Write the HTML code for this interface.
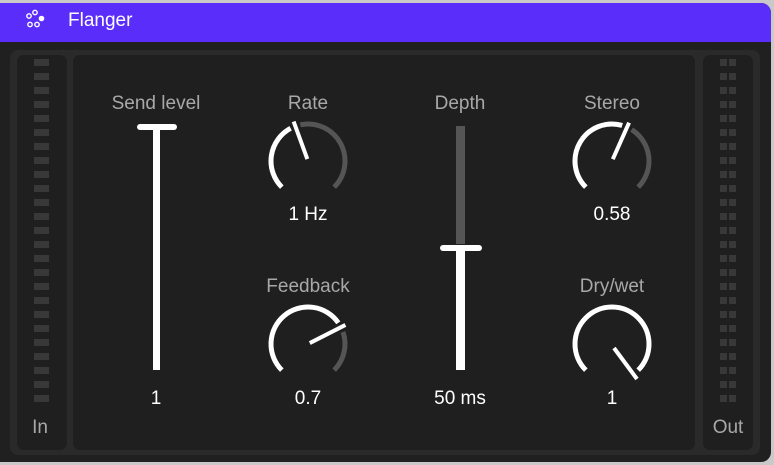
<!DOCTYPE html>
<html><head><style>
body{margin:0;width:774px;height:465px;background:#c9c9c9;overflow:hidden;font-family:"Liberation Sans",sans-serif;position:relative}
.win{position:absolute;left:0;top:3px;width:771px;height:459px;background:#202020;border-radius:0 10px 10px 0;overflow:hidden}
.hdr{position:absolute;left:0;top:0;width:771px;height:39px;background:#5a2dfb}
.hdr .t{position:absolute;left:68px;top:7px;color:#fff;font-size:19px}
.box{position:absolute;left:10px;top:47px;width:750px;height:405px;background:#2a2a2a;border-radius:8px}
.p{position:absolute;background:#1f1f1f;border-radius:7px}
.lbl{position:absolute;color:#a8a8a8;font-size:19px;text-align:center;width:140px}
.val{position:absolute;color:#fff;font-size:19px;text-align:center;width:140px}
</style></head><body>
<div class="win">
<div class="hdr"><svg style="position:absolute;left:24px;top:6px" width="24" height="24"><g fill="none" stroke="#fff" stroke-width="1.4"><circle cx="5" cy="7" r="2.2"/><circle cx="11" cy="3.5" r="2.2"/><circle cx="6" cy="15.5" r="2.2"/><circle cx="13" cy="15.5" r="2.2"/></g><circle cx="17.5" cy="9.5" r="2.8" fill="#fff"/></svg><div class="t">Flanger</div></div>
<div class="box"></div>
<div class="p" style="left:17px;top:52px;width:50px;height:395px"></div>
<div class="p" style="left:73px;top:52px;width:622px;height:395px"></div>
<div class="p" style="left:703px;top:52px;width:50px;height:395px"></div>
<div class="lbl" style="left:86px;top:90px">Send level</div>
<div class="lbl" style="left:238px;top:90px">Rate</div>
<div class="lbl" style="left:390px;top:90px">Depth</div>
<div class="lbl" style="left:542px;top:90px">Stereo</div>
<div class="lbl" style="left:238px;top:273px">Feedback</div>
<div class="lbl" style="left:542px;top:273px">Dry/wet</div>
<div class="val" style="left:238px;top:201px">1 Hz</div>
<div class="val" style="left:542px;top:201px">0.58</div>
<div class="val" style="left:86px;top:385px">1</div>
<div class="val" style="left:238px;top:385px">0.7</div>
<div class="val" style="left:390px;top:385px">50 ms</div>
<div class="val" style="left:542px;top:385px">1</div>
<div class="lbl" style="left:-30px;top:414px">In</div>
<div class="lbl" style="left:658px;top:414px">Out</div>
<svg style="position:absolute;left:0;top:-3px" width="774" height="465" id="s"></svg>
</div>
<script>
var s=document.getElementById('s'),h='';
h+='<rect x="153" y="128" width="7" height="242" fill="#fff"/><rect x="137" y="124" width="40" height="6" rx="3" fill="#fff"/>';
h+='<rect x="456" y="126" width="9" height="118" fill="#555"/><rect x="456" y="250" width="9" height="120" fill="#fff"/><rect x="440" y="245" width="42" height="6" rx="3" fill="#fff"/>';
function pt(cx,cy,r,a){a=a*Math.PI/180;return [cx+r*Math.sin(a),cy-r*Math.cos(a)];}
function arc(cx,cy,r,a1,a2,c){var p=pt(cx,cy,r,a1),q=pt(cx,cy,r,a2);return '<path d="M'+p[0]+' '+p[1]+' A'+r+' '+r+' 0 '+((a2-a1)>180?1:0)+' 1 '+q[0]+' '+q[1]+'" fill="none" stroke="'+c+'" stroke-width="5"/>';}
function knob(cx,cy,a){var r=37;h+=arc(cx,cy,r,-135,a-8,'#fff');if(a<130)h+=arc(cx,cy,r,a+8,135,'#555');var p=pt(cx,cy,2,a),q=pt(cx,cy,42,a);h+='<line x1="'+p[0]+'" y1="'+p[1]+'" x2="'+q[0]+'" y2="'+q[1]+'" stroke="#fff" stroke-width="4"/>';}
knob(308,161,-20);knob(308,344,63);knob(612,161,24);
h+=arc(612,344,37,-135,135,'#fff');h+='<line x1="614" y1="348" x2="637" y2="379" stroke="#fff" stroke-width="4"/>';
for(var y=59;y<400;y+=14){h+='<rect x="34" y="'+y+'" width="15" height="7" fill="#383838"/><rect x="720" y="'+y+'" width="7" height="7" fill="#383838"/><rect x="729" y="'+y+'" width="7" height="7" fill="#383838"/>';}
s.innerHTML=h;
</script>
</body></html>
